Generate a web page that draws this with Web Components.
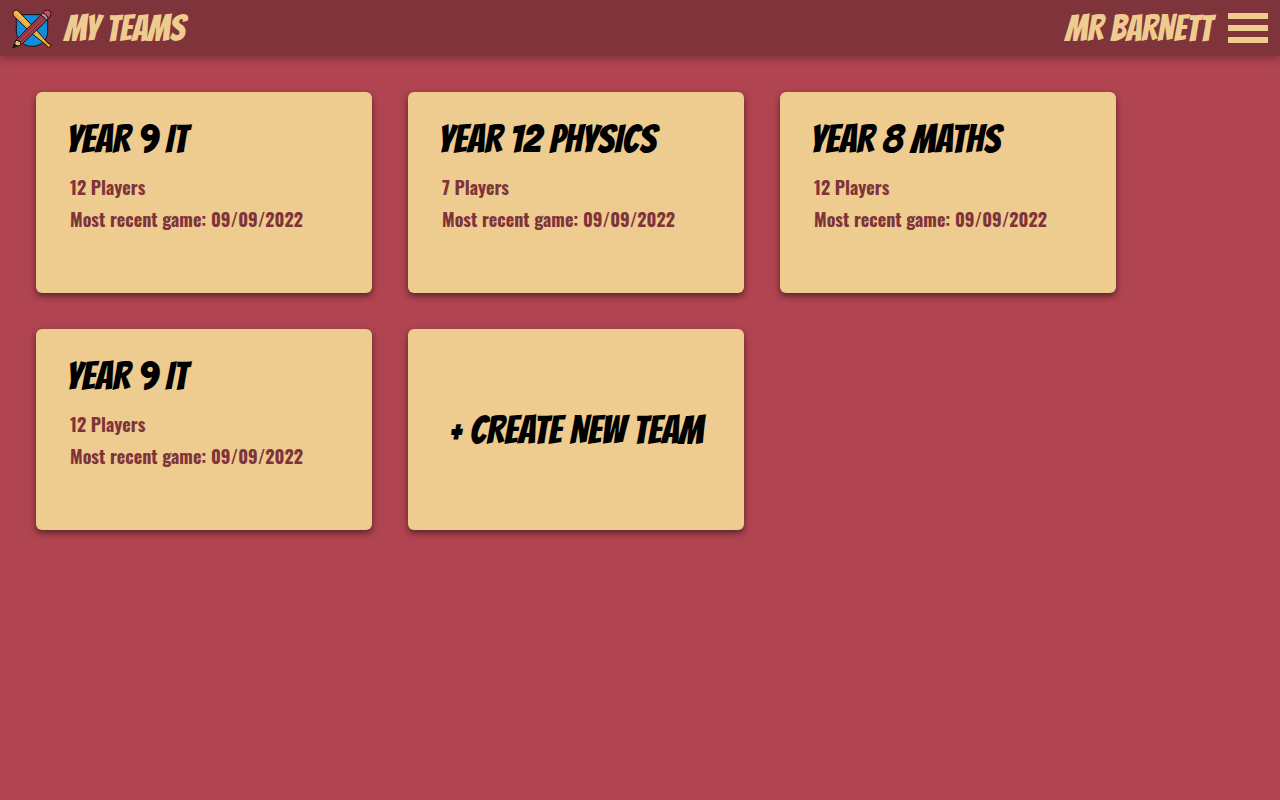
<!DOCTYPE html>
<html lang="en">
<head>
<meta charset="utf-8">
<meta name="viewport" content="width=device-width, initial-scale=1">
<title>My Teams</title>
<style>
  :root {
    --page: #b04450;
    --bar: #7f333a;
    --sand: #eecb8f;
    --display: "Bangers", "Liberation Sans Narrow", "Liberation Sans", sans-serif;
    --body: "Oswald", "Liberation Sans Narrow", "Liberation Sans", sans-serif;
  }
  body { margin: 0; min-height: 100vh; background: var(--page); font-family: var(--body); }
</style>
</head>
<body>
<teams-page>
  <app-bar slot="bar" user="MR BARNETT">MY TEAMS</app-bar>
  <team-card players="12" recent="09/09/2022">YEAR 9 IT</team-card>
  <team-card players="7" recent="09/09/2022">YEAR 12 PHYSICS</team-card>
  <team-card players="12" recent="09/09/2022">YEAR 8 MATHS</team-card>
  <team-card players="12" recent="09/09/2022">YEAR 9 IT</team-card>
  <create-card>+ CREATE NEW TEAM</create-card>
</teams-page>
<script>
  const define = (name, html, setup) => customElements.define(name, class extends HTMLElement {
    constructor() {
      super();
      this.attachShadow({ mode: "open" }).innerHTML = html;
    }
    connectedCallback() { if (setup) setup(this, this.shadowRoot); }
  });

  define("team-logo", `
    <style>:host { display: block; width: 40px; height: 40px; } svg { display: block; width: 100%; height: 100%; }</style>
    <svg viewBox="0 0 120 120" aria-hidden="true" stroke="#1b1116" stroke-width="3" stroke-linejoin="round">
      <path fill="#0f8edd" d="M13 20H107V70C107 97 86 115 60 115S13 97 13 70Z"/>
      <path fill="#eaae45" d="M3 17Q1 11 7 8Q13 4 19 9L68 60L108 106L114 108L118 111L109 119L105 113L59 76L8 27Q3 21 3 17Z"/>
      <path fill="none" stroke="#f7ce78" d="M12 12L64 67"/>
      <path fill="#eaba73" d="M12 96L3 119L28 110L24 100Z"/>
      <path fill="#1b1116" d="M7 108L3 119L16 114Z"/>
      <path fill="#a93d49" d="M12 96L88 19L106 36L28 110L24 100Z"/>
      <path fill="none" stroke="#6d2732" d="M18 97L92 24M25 103L100 30"/>
      <path fill="#aaa3a5" d="M86 21L92 14Q104 19 109 30L103 37Q98 26 86 21Z"/>
      <path fill="#d94754" d="M92 14L98 8Q107 3 114 9Q120 16 115 24L109 30Q104 19 92 14Z"/>
    </svg>`);

  define("app-bar", `
    <style>
      :host { display: block; position: relative; background: var(--bar); color: var(--sand);
        box-shadow: 0 2px 8px rgba(0, 0, 0, .3); font: 36px/40px var(--display); }
      header { display: flex; align-items: center; gap: 12px; height: 56px; padding: 0 12px; }
      h1, span { margin: 0; padding-top: 2px; font: inherit; }
      h1 { flex: 1; }
      span { padding-right: 4px; }
      button { display: flex; flex-direction: column; gap: 6px; width: 40px; padding: 0; border: 0; background: none; cursor: pointer; }
      i { display: block; width: 100%; height: 6px; background: var(--sand); }
    </style>
    <header>
      <team-logo></team-logo>
      <h1><slot></slot></h1>
      <span id="user"></span>
      <button type="button" aria-label="Menu"><i></i><i></i><i></i></button>
    </header>`,
    (el, root) => { root.getElementById("user").textContent = el.getAttribute("user"); });

  const cardBox = `
    box-sizing: border-box; min-height: 201px; border-radius: 6px; background: var(--sand);
    box-shadow: 0 3px 6px rgba(0, 0, 0, .5);`;

  define("team-card", `
    <style>
      :host { display: block; padding: 24px 30px; ${cardBox} }
      h2 { margin: 0 0 9px; font: 40px/46px var(--display); color: #000; }
      p { margin: 0; padding-left: 4px; font: bold 18px/32px var(--body); color: var(--bar); }
    </style>
    <article>
      <h2><slot></slot></h2>
      <p id="players"></p>
      <p id="recent"></p>
    </article>`,
    (el, root) => {
      root.getElementById("players").textContent = el.getAttribute("players") + " Players";
      root.getElementById("recent").textContent = "Most recent game: " + el.getAttribute("recent");
    });

  define("create-card", `
    <style>
      :host { display: grid; }
      button { border: 0; padding: 0 32px; ${cardBox} font: 40px/46px var(--display); color: #000; cursor: pointer; }
    </style>
    <button type="button"><slot></slot></button>`);

  define("teams-page", `
    <style>
      :host { display: block; }
      main { display: grid; grid-template-columns: repeat(auto-fill, minmax(min(100%, 336px), 336px)); gap: 36px; padding: 36px; }
    </style>
    <slot name="bar"></slot>
    <main><slot></slot></main>`);
</script>
</body>
</html>
